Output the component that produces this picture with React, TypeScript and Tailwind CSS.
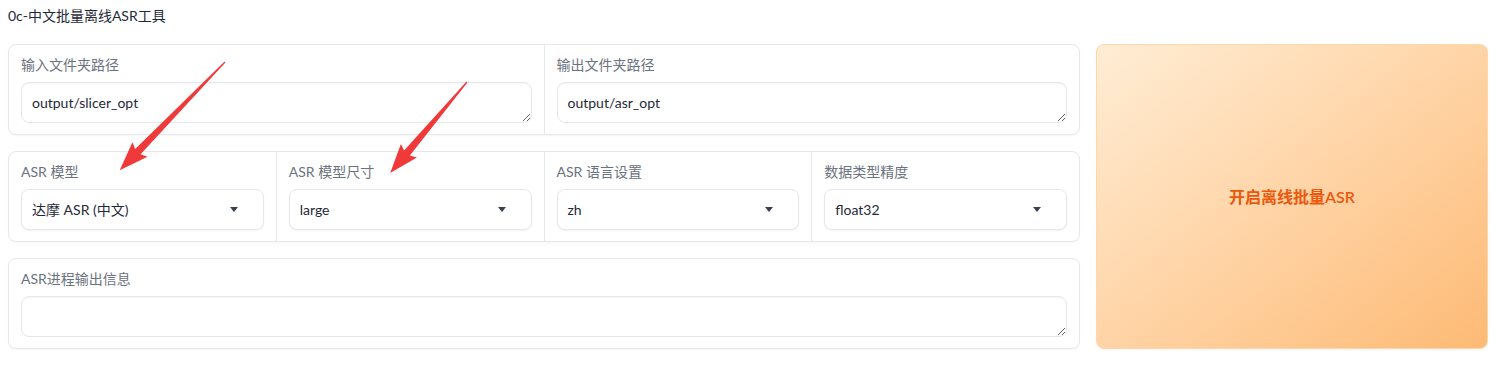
const font = { fontFamily: 'Lato, "Noto Sans CJK SC", "Noto Sans", sans-serif' };

function Label({ text }: { text: string }) {
  return <div className="h-[20px] leading-[20px] text-[14px] text-[#6b7280] mb-[7px]">{text}</div>;
}

function TextField({ label, value }: { label: string; value: string }) {
  return (
    <div className="flex-1 px-3 pt-[10px] pb-[11px]">
      <Label text={label} />
      <textarea
        readOnly
        value={value}
        rows={1}
        className="block w-full h-[41px] rounded-lg border border-[#e5e7eb] bg-white px-[10px] py-[10px] text-[14px] leading-[20px] text-[#1f2937] shadow-[inset_0_1px_2px_rgba(0,0,0,0.04)] outline-none"
        style={font}
      />
    </div>
  );
}

function Dropdown({ label, value }: { label: string; value: string }) {
  return (
    <div className="flex-1 px-3 pt-[10px] pb-[11px]">
      <Label text={label} />
      <div className="flex h-[41px] items-center justify-between rounded-lg border border-[#e5e7eb] bg-white pl-[10px] pr-[25px] text-[14px] text-[#1f2937] shadow-[0_1px_2px_rgba(0,0,0,0.05)]">
        <span>{value}</span>
        <svg width="8" height="5" viewBox="0 0 8 5">
          <path d="M0 0 L8 0 L4 5 Z" fill="#374151" />
        </svg>
      </div>
    </div>
  );
}

function Box({ children }: { children: React.ReactNode }) {
  return (
    <div className="flex divide-x divide-[#e5e7eb] rounded-lg border border-[#e5e7eb] bg-white shadow-[0_1px_2px_rgba(0,0,0,0.04)]">
      {children}
    </div>
  );
}

function Arrow({ x, y, angle, len }: { x: number; y: number; angle: number; len: number }) {
  const b = len - 26;
  return (
    <g transform={`translate(${x},${y}) rotate(${angle})`}>
      <polygon
        points={`0,-0.6 ${b},-3.8 ${b - 3},-10.5 ${len},0 ${b - 3},10.5 ${b},3.8 0,0.6`}
        fill="#f03a3a"
      />
    </g>
  );
}

export default function App() {
  return (
    <div className="relative h-[368px] w-full bg-white px-2" style={font}>
      <div className="pt-[6px] h-[20px] leading-[20px] text-[14px] text-[#1f2937] box-content">0c-中文批量离线ASR工具</div>
      <div className="mt-[18px] flex gap-4">
        <div className="flex flex-1 flex-col gap-4">
          <Box>
            <TextField label="输入文件夹路径" value="output/slicer_opt" />
            <TextField label="输出文件夹路径" value="output/asr_opt" />
          </Box>
          <Box>
            <Dropdown label="ASR 模型" value="达摩 ASR (中文)" />
            <Dropdown label="ASR 模型尺寸" value="large" />
            <Dropdown label="ASR 语言设置" value="zh" />
            <Dropdown label="数据类型精度" value="float32" />
          </Box>
          <Box>
            <TextField label="ASR进程输出信息" value="" />
          </Box>
        </div>
        <button className="w-[392px] rounded-lg border border-[#fed7aa] bg-gradient-to-br from-[#ffedd5] to-[#fdba74] text-[16px] font-semibold text-[#ea580c] shadow-[0_1px_2px_rgba(0,0,0,0.05)]">
          开启离线批量ASR
        </button>
      </div>
      <svg className="pointer-events-none absolute inset-0" width="1496" height="368">
        <Arrow x={225} y={62} angle={134.2} len={151} />
        <Arrow x={467} y={82} angle={130.2} len={119} />
      </svg>
    </div>
  );
}
